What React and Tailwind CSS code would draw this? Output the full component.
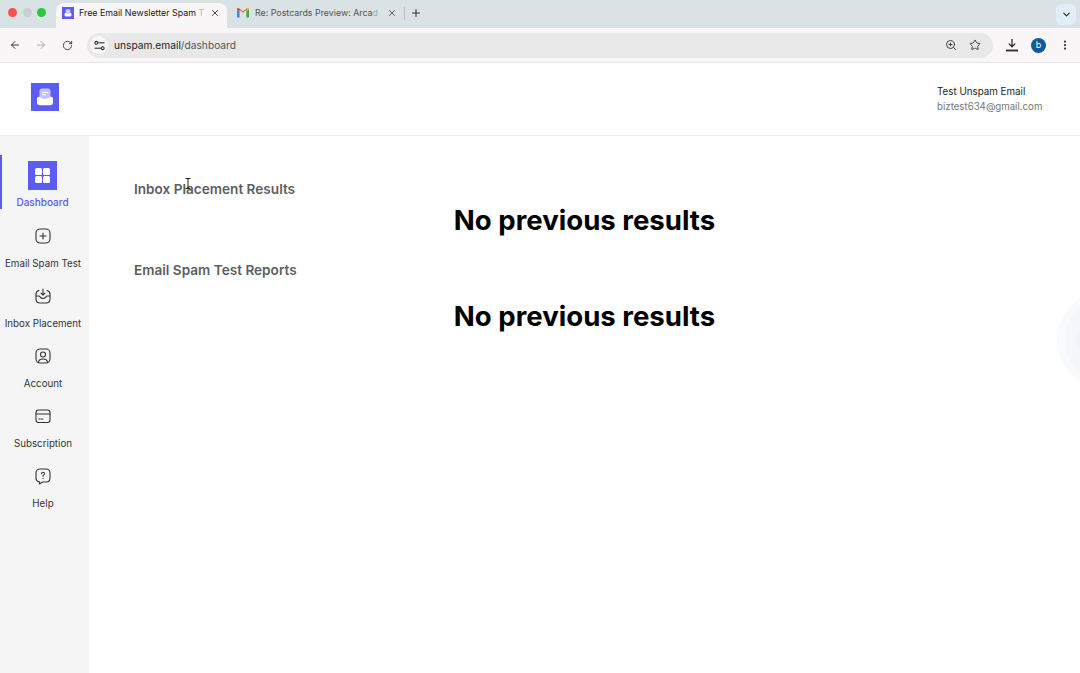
import React from "react";
import {
  ArrowLeft,
  ArrowRight,
  RotateCw,
  X,
  Plus,
  ChevronDown,
  ZoomIn,
  Star,
  EllipsisVertical,
} from "lucide-react";

const font = { fontFamily: "Inter, sans-serif" };

function LogoGlyph({ size }) {
  return (
    <svg width={size} height={size} viewBox="0 0 28 28">
      <rect x="8.5" y="5.5" width="11" height="12" rx="2.5" fill="#c3c1ff" />
      <rect x="11" y="9" width="6" height="1" fill="#fff" />
      <rect x="11" y="11.2" width="4" height="1" fill="#fff" />
      <path
        d="M6 15.5c0-1 1-1.800 2-1.800 1.500 0 2 2 6 2s4.500-2 6-2c1 0 2 .8 2 1.800v4c0 1.800-1.200 2.700-2.800 2.700H8.800C7.200 22.200 6 21.300 6 19.500z"
        fill="#fff"
      />
    </svg>
  );
}

function GmailIcon() {
  return (
    <svg width="12" height="10" viewBox="0 0 12 10">
      <path d="M0 1.200 V9.500 H2.600 V3.200z" fill="#4285f4" />
      <path d="M12 1.200 V9.500 H9.400 V3.200z" fill="#34a853" />
      <path d="M0 1.200 C0 0 1.300-.3 2 .3 L6 3.400 10 .3 C10.700-.3 12 0 12 1.200 L9.400 3.200 V1.900 L6 4.600 2.600 1.900 V3.200z" fill="#ea4335" />
      <path d="M9.400 1.900 L10 .3 C10.700-.3 12 0 12 1.200 L9.400 3.200z" fill="#fbbc04" />
    </svg>
  );
}

function DownloadTray() {
  return (
    <svg width="14" height="14" viewBox="0 0 14 14" fill="none" stroke="#2a2a2a" strokeWidth="1.300">
      <path d="M7 1v7.500M3.800 5.600 7 8.800l3.200-3.200" />
      <path d="M1 12.500h12" strokeWidth="1.800" />
    </svg>
  );
}

function TuneIcon() {
  return (
    <svg width="11" height="11" viewBox="0 0 11 11" fill="none" stroke="#2f2f2f" strokeWidth="1.100">
      <circle cx="2.300" cy="2.800" r="1.400" />
      <path d="M4.200 2.800H10.500" />
      <circle cx="8.700" cy="8.200" r="1.400" />
      <path d="M.5 8.200H6.800" />
    </svg>
  );
}

function NavSvg({ children }) {
  return (
    <svg width="18" height="18" viewBox="0 0 18 18" fill="none" stroke="#333" strokeWidth="1.100" strokeLinecap="round" strokeLinejoin="round">
      {children}
    </svg>
  );
}

const navItems = [
  {
    label: "Email Spam Test",
    icon: (
      <NavSvg>
        <rect x="2" y="2" width="14" height="14" rx="4" />
        <path d="M9 6v6M6 9h6" />
      </NavSvg>
    ),
  },
  {
    label: "Inbox Placement",
    icon: (
      <NavSvg>
        <path d="M5 3.500C3 4 2 5.500 2 7v5c0 2.500 1.500 4 4 4h6c2.500 0 4-1.500 4-4V7c0-1.500-1-3-3-3.500" />
        <path d="M2.200 9H5c1 0 1.300 2.500 4 2.500S12 9 13 9h2.800" />
        <path d="M9 2v6M7 6.200 9 8.200l2-2" />
      </NavSvg>
    ),
  },
  {
    label: "Account",
    icon: (
      <NavSvg>
        <rect x="2" y="2" width="14" height="14" rx="4" />
        <circle cx="9" cy="7.500" r="2.500" />
        <path d="M4.500 15.500c0-2.500 2-3.500 4.500-3.500s4.500 1 4.500 3.500" />
      </NavSvg>
    ),
  },
  {
    label: "Subscription",
    icon: (
      <NavSvg>
        <rect x="2" y="3" width="14" height="12.500" rx="2.500" />
        <path d="M2 7h14" />
        <path d="M4.800 12h1.500M7.500 12h1.500" />
      </NavSvg>
    ),
  },
  {
    label: "Help",
    icon: (
      <NavSvg>
        <path d="M6 2h6c2.500 0 4 1.500 4 4v5c0 2.500-1.500 4-4 4H8.500L5.500 17v-2.100C3.300 14.600 2 13.200 2 11V6c0-2.500 1.500-4 4-4z" />
        <path d="M7.500 6.800c0-1 .7-1.500 1.500-1.500s1.500.6 1.500 1.400c0 1.200-1.500 1.300-1.500 2.500" />
        <path d="M9 11.300v.2" />
      </NavSvg>
    ),
  },
];

function BrowserChrome() {
  return (
    <div className="shrink-0">
      <div className="flex h-[28px] items-end bg-[#d9e2e5] relative">
        <div className="flex h-[28px] w-[56px] shrink-0 items-center gap-[5.500px] pl-[8px] pb-[3px]">
          <span className="h-[9px] w-[9px] rounded-full bg-[#f0544c]" />
          <span className="h-[9px] w-[9px] rounded-full bg-[#c6cfd1]" />
          <span className="h-[9px] w-[9px] rounded-full bg-[#2ac840]" />
        </div>
        <div className="flex h-[25px] w-[171px] shrink-0 items-center rounded-t-[8px] bg-[#f8f6f6] pb-[5px] pl-[6px] pr-[7px]">
          <span className="flex h-[12px] w-[12px] shrink-0 items-center justify-center bg-[#5b5bf6]">
            <LogoGlyph size={12} />
          </span>
          <span className="ml-[5px] whitespace-nowrap text-[8.850px] text-[#222]">
            Free Email Newsletter Spam <span className="opacity-30">T</span>
          </span>
          <X size={10} strokeWidth={2} className="ml-auto text-[#222]" />
        </div>
        <div className="flex h-[25px] w-[177px] shrink-0 items-center pb-[5px] pl-[10px] pr-[7px]">
          <GmailIcon />
          <span className="ml-[6px] whitespace-nowrap text-[8.850px] text-[#555]">
            Re: Postcards Preview: Arca<span className="opacity-40">d</span>
          </span>
          <X size={10} strokeWidth={2} className="ml-auto text-[#444]" />
        </div>
        <span className="mb-[8px] h-[13px] w-px bg-[#b5bec2]" />
        <Plus size={12} strokeWidth={2} className="ml-[5px] mb-[9px] text-[#333]" />
        <div className="ml-auto mr-[4px] mb-[3px] flex h-[21px] w-[20px] items-center justify-center rounded-[6px] bg-[#e3edf8]">
          <ChevronDown size={11} strokeWidth={2.500} className="text-[#1f2a33]" />
        </div>
      </div>
      <div className="flex h-[35px] items-center border-b border-[#e6e6e6] bg-[#f8f6f6] pl-[9px]">
        <ArrowLeft size={12} strokeWidth={2} className="text-[#3a3a3a]" />
        <ArrowRight size={12} strokeWidth={2} className="ml-[14px] text-[#a8a8a8]" />
        <RotateCw size={11} strokeWidth={2} className="ml-[15px] text-[#3a3a3a]" />
        <div className="ml-[14px] flex h-[25px] w-[906px] items-center rounded-full bg-[#e8e8e8] pl-[3px]">
          <span className="flex h-[18px] w-[18px] items-center justify-center rounded-full bg-[#f8f6f6]">
            <TuneIcon />
          </span>
          <span className="ml-[6px] mt-px text-[10.200px] text-[#222]">
            unspam.email<span className="text-[#555]">/dashboard</span>
          </span>
          <ZoomIn size={12} strokeWidth={1.800} className="ml-auto text-[#333]" />
          <Star size={12} strokeWidth={1.800} className="ml-[12px] mr-[12px] text-[#333]" />
        </div>
        <span className="ml-[12px]">
          <DownloadTray />
        </span>
        <span className="ml-[12px] flex h-[15px] w-[15px] items-center justify-center rounded-full bg-[#0b5a9c] text-[9px] text-white">
          b
        </span>
        <EllipsisVertical size={12} strokeWidth={2.500} className="ml-[13px] text-[#333]" />
      </div>
    </div>
  );
}

function Sidebar() {
  return (
    <aside className="flex w-[89px] shrink-0 flex-col bg-[#f5f5f5] pt-[19px]">
      <div className="flex h-[54px] flex-col items-center border-l-2 border-[#5b5bf6] pr-[6px] pt-[6px]">
        <span className="flex h-[29px] w-[29px] items-center justify-center bg-[#5b5bf6]">
          <span className="grid grid-cols-2 gap-[1.500px]">
            <span className="h-[6.500px] w-[6.500px] rounded-[1.500px] bg-white" />
            <span className="h-[6.500px] w-[6.500px] rounded-[1.500px] bg-white" />
            <span className="h-[6.500px] w-[6.500px] rounded-[1.500px] bg-white" />
            <span className="h-[6.500px] w-[6.500px] rounded-[1.500px] bg-white" />
          </span>
        </span>
        <span className="mt-[6px] text-[10px] leading-[13px] font-medium text-[#5b5bf6]">Dashboard</span>
      </div>
      <div className="flex flex-col pr-[3px] pt-[18px]">
        {navItems.map((item) => (
          <div key={item.label} className="flex h-[60px] flex-col items-center">
            {item.icon}
            <span className="mt-[12px] text-[9.750px] leading-[13px] whitespace-nowrap text-[#333]">{item.label}</span>
          </div>
        ))}
      </div>
    </aside>
  );
}

export default function App() {
  return (
    <div className="relative flex h-[673px] w-[1080px] flex-col overflow-hidden bg-white" style={font}>
      <BrowserChrome />
      <header className="flex h-[73px] shrink-0 items-start justify-between border-b border-[#ececec] pl-[31px] pr-[37px]">
        <div className="mt-[20px] flex h-[28px] w-[28px] items-center justify-center bg-[#5b5bf6]">
          <LogoGlyph size={28} />
        </div>
        <div className="mt-[21px] w-[106px]">
          <p className="text-[9.800px] leading-[15px] text-[#222]">Test Unspam Email</p>
          <p className="text-[9.700px] leading-[15px] text-[#777]">biztest634@gmail.com</p>
        </div>
      </header>
      <div className="flex min-h-0 flex-1">
        <Sidebar />
        <main className="flex-1 pl-[45px] pt-[45px]">
          <h2 className="text-[13.600px] leading-[16px] font-semibold text-[#5e5e5e]">Inbox Placement Results</h2>
          <h1 className="-ml-[45px] mt-[5px] text-center text-[27.600px] leading-[36px] font-bold text-black">No previous results</h1>
          <h2 className="mt-[24px] text-[13.600px] leading-[16px] font-semibold text-[#5e5e5e]">Email Spam Test Reports</h2>
          <h1 className="-ml-[45px] mt-[20px] text-center text-[27.600px] leading-[36px] font-bold text-black">No previous results</h1>
        </main>
      </div>
      {/* faint blob peeking in from the right edge */}
      <div className="absolute left-[1057px] top-[290px] flex h-[100px] w-[100px] items-center justify-center rounded-full bg-[#f9fafc]">
        <div className="flex h-[84px] w-[84px] items-center justify-center rounded-full bg-[#f5f7fb]">
          <div className="h-[60px] w-[60px] rounded-full bg-[#f1f3f8]" />
        </div>
      </div>
      {/* text cursor */}
      <svg className="absolute left-[185px] top-[178px]" width="6" height="11" viewBox="0 0 6 11" fill="none" stroke="#222" strokeWidth="1">
        <path d="M.5.500h5M3 .500v10M.5 10.500h5" />
      </svg>
    </div>
  );
}
